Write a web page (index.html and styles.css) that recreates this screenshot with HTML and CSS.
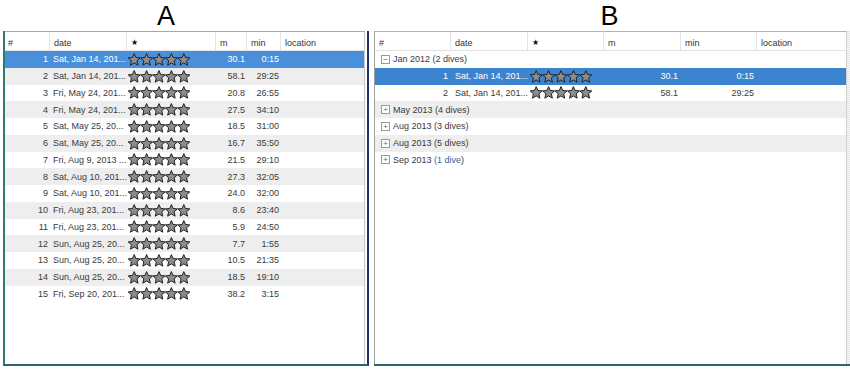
FILE: index.html
```html
<!DOCTYPE html>
<html>
<head>
<meta charset="utf-8">
<link rel="stylesheet" href="styles.css">
</head>
<body>
<svg class="defs" width="0" height="0">
  <defs>
    <polygon id="st" points="6.2,0.6 7.9,4.5 12.2,4.9 8.95,7.8 9.95,12.2 6.2,9.9 2.45,12.2 3.45,7.8 0.2,4.9 4.5,4.5"/>
    <g id="five">
      <use href="#st" x="0"/><use href="#st" x="12.4"/><use href="#st" x="24.8"/><use href="#st" x="37.2"/><use href="#st" x="49.6"/>
    </g>
  </defs>
</svg>
<div class="titles">
  <div class="title title-a">A</div>
  <div class="title title-b">B</div>
</div>
<div class="panels">
  <div class="panel-a">
    <div class="view-a">
      <div class="row-a head">
        <div class="h">#</div><div class="h">date</div><div class="h hstar">★</div><div class="h">m</div><div class="h">min</div><div class="h last">location</div>
      </div>
      <div class="row-a sel"><div class="num">1</div><div class="date">Sat, Jan 14, 201...</div><div class="stars"><svg viewBox="0 0 62 13" class="st5"><use href="#five"/></svg></div><div class="m">30.1</div><div class="min">0:15</div><div></div></div>
      <div class="row-a alt"><div class="num">2</div><div class="date">Sat, Jan 14, 201...</div><div class="stars"><svg viewBox="0 0 62 13" class="st5"><use href="#five"/></svg></div><div class="m">58.1</div><div class="min">29:25</div><div></div></div>
      <div class="row-a"><div class="num">3</div><div class="date">Fri, May 24, 201...</div><div class="stars"><svg viewBox="0 0 62 13" class="st5"><use href="#five"/></svg></div><div class="m">20.8</div><div class="min">26:55</div><div></div></div>
      <div class="row-a alt"><div class="num">4</div><div class="date">Fri, May 24, 201...</div><div class="stars"><svg viewBox="0 0 62 13" class="st5"><use href="#five"/></svg></div><div class="m">27.5</div><div class="min">34:10</div><div></div></div>
      <div class="row-a"><div class="num">5</div><div class="date">Sat, May 25, 20...</div><div class="stars"><svg viewBox="0 0 62 13" class="st5"><use href="#five"/></svg></div><div class="m">18.5</div><div class="min">31:00</div><div></div></div>
      <div class="row-a alt"><div class="num">6</div><div class="date">Sat, May 25, 20...</div><div class="stars"><svg viewBox="0 0 62 13" class="st5"><use href="#five"/></svg></div><div class="m">16.7</div><div class="min">35:50</div><div></div></div>
      <div class="row-a"><div class="num">7</div><div class="date">Fri, Aug 9, 2013 ...</div><div class="stars"><svg viewBox="0 0 62 13" class="st5"><use href="#five"/></svg></div><div class="m">21.5</div><div class="min">29:10</div><div></div></div>
      <div class="row-a alt"><div class="num">8</div><div class="date">Sat, Aug 10, 201...</div><div class="stars"><svg viewBox="0 0 62 13" class="st5"><use href="#five"/></svg></div><div class="m">27.3</div><div class="min">32:05</div><div></div></div>
      <div class="row-a"><div class="num">9</div><div class="date">Sat, Aug 10, 201...</div><div class="stars"><svg viewBox="0 0 62 13" class="st5"><use href="#five"/></svg></div><div class="m">24.0</div><div class="min">32:00</div><div></div></div>
      <div class="row-a alt"><div class="num">10</div><div class="date">Fri, Aug 23, 201...</div><div class="stars"><svg viewBox="0 0 62 13" class="st5"><use href="#five"/></svg></div><div class="m">8.6</div><div class="min">23:40</div><div></div></div>
      <div class="row-a"><div class="num">11</div><div class="date">Fri, Aug 23, 201...</div><div class="stars"><svg viewBox="0 0 62 13" class="st5"><use href="#five"/></svg></div><div class="m">5.9</div><div class="min">24:50</div><div></div></div>
      <div class="row-a alt"><div class="num">12</div><div class="date">Sun, Aug 25, 20...</div><div class="stars"><svg viewBox="0 0 62 13" class="st5"><use href="#five"/></svg></div><div class="m">7.7</div><div class="min">1:55</div><div></div></div>
      <div class="row-a"><div class="num">13</div><div class="date">Sun, Aug 25, 20...</div><div class="stars"><svg viewBox="0 0 62 13" class="st5"><use href="#five"/></svg></div><div class="m">10.5</div><div class="min">21:35</div><div></div></div>
      <div class="row-a alt"><div class="num">14</div><div class="date">Sun, Aug 25, 20...</div><div class="stars"><svg viewBox="0 0 62 13" class="st5"><use href="#five"/></svg></div><div class="m">18.5</div><div class="min">19:10</div><div></div></div>
      <div class="row-a"><div class="num">15</div><div class="date">Fri, Sep 20, 201...</div><div class="stars"><svg viewBox="0 0 62 13" class="st5"><use href="#five"/></svg></div><div class="m">38.2</div><div class="min">3:15</div><div></div></div>
    </div>
  </div>
  <div class="panel-b">
    <div class="view-b">
      <div class="row-b head">
        <div class="h">#</div><div class="h">date</div><div class="h hstar">★</div><div class="h">m</div><div class="h">min</div><div class="h last">location</div>
      </div>
      <div class="grp"><span class="exp">−</span><span>Jan 2012 (2 dives)</span></div>
      <div class="row-b sel"><div class="num">1</div><div class="date">Sat, Jan 14, 201...</div><div class="stars"><svg viewBox="0 0 62 13" class="st5"><use href="#five"/></svg></div><div class="m">30.1</div><div class="min">0:15</div><div></div></div>
      <div class="row-b"><div class="num">2</div><div class="date">Sat, Jan 14, 201...</div><div class="stars"><svg viewBox="0 0 62 13" class="st5"><use href="#five"/></svg></div><div class="m">58.1</div><div class="min">29:25</div><div></div></div>
      <div class="grp alt"><span class="exp">+</span><span>May 2013 (4 dives)</span></div>
      <div class="grp"><span class="exp">+</span><span>Aug 2013 (3 dives)</span></div>
      <div class="grp alt"><span class="exp">+</span><span>Aug 2013 (5 dives)</span></div>
      <div class="grp"><span class="exp">+</span><span>Sep 2013 <span class="blue">(1 dive</span>)</span></div>
    </div>
    <div class="scroll"></div>
  </div>
</div>
</body>
</html>
```

FILE: styles.css
```css
html, body {
  margin: 0;
  padding: 0;
  background: #ffffff;
}
body {
  width: 850px;
  height: 371px;
  overflow: hidden;
  font-family: "Liberation Sans", Arial, sans-serif;
  font-size: 9px;
  color: #3a3a3a;
}
.defs {
  position: absolute;
  width: 0;
  height: 0;
}
.titles {
  display: flex;
  height: 31px;
}
.title {
  font-size: 27px;
  line-height: 33px;
  color: #000;
  text-align: center;
}
.title-a {
  width: 332px;
  padding-right: 37px;
}
.title-b {
  width: 481px;
}
.panels {
  display: flex;
  height: 335px;
  gap: 5px;
}
.panel-a {
  margin-left: 3px;
  width: 362px;
  border-left: 2px solid #2f7b73;
  border-bottom: 2px solid #2c6670;
  border-right: 2px solid #25306a;
  display: flex;
}
.view-a {
  width: 359px;
  border-top: 1px solid #a8a8a8;
  border-right: 1px solid #c4c4c4;
  background: #fff;
}
.row-a {
  display: grid;
  grid-template-columns: 45px 77px 89px 31px 34px 1fr;
  height: 16.76px;
  align-items: center;
  white-space: nowrap;
}
.row-b {
  display: grid;
  grid-template-columns: 76px 77px 76px 77px 76px 1fr;
  height: 16.76px;
  align-items: center;
  white-space: nowrap;
}
.head {
  height: 18px;
  border-bottom: 1px solid #e2e2e2;
  color: #333;
}
.h {
  height: 100%;
  box-sizing: border-box;
  display: flex;
  align-items: center;
  padding-left: 4px;
  padding-top: 3px;
  border-right: 1px solid #e4e4e4;
}
.row-a .h:first-child {
  padding-left: 3px;
}
.h.last {
  border-right: none;
}
.hstar {
  font-size: 8px;
  color: #111;
}
.alt {
  background: #eeeeee;
}
.row-a.sel {
  background: #4a8fd9;
  color: #fff;
}
.row-b.sel {
  background: #3d84d0;
  color: #fff;
}
.num {
  text-align: right;
  padding-right: 2px;
}
.date {
  padding-left: 3px;
  overflow: hidden;
}
.stars {
  padding-left: 1px;
  display: flex;
  align-items: center;
}
.st5 {
  width: 62px;
  height: 13px;
  fill: #8c8c8c;
  stroke: #222222;
  stroke-width: 1;
  stroke-linejoin: round;
}
.m, .min {
  text-align: right;
  padding-right: 2px;
}
.row-b .num {
  padding-right: 3px;
}
.row-b .date {
  padding-left: 4px;
}
.row-b .stars {
  padding-left: 2px;
}
.row-b .m, .row-b .min {
  padding-right: 3px;
}
.panel-b {
  flex: 1;
  display: flex;
  border-bottom: 2px solid #2c6670;
}
.view-b {
  flex: 1;
  border-left: 1px solid #a0a0a0;
  border-top: 1px solid #b4b4b4;
  border-right: 1px solid #cfcfcf;
}
.scroll {
  width: 3px;
  background: repeating-linear-gradient(180deg, #e6e6e6 0, #e6e6e6 1px, #f7f7f7 1px, #f7f7f7 2px);
}
.grp {
  height: 16.76px;
  display: flex;
  align-items: center;
  padding-left: 6px;
  gap: 3px;
  color: #3a3a3a;
  white-space: nowrap;
}
.exp {
  width: 7px;
  height: 7px;
  border: 1px solid #9a9a9a;
  background: #fff;
  color: #666;
  font-size: 8px;
  line-height: 7px;
  text-align: center;
  overflow: hidden;
}
.blue {
  color: #3a5fa8;
}
```
